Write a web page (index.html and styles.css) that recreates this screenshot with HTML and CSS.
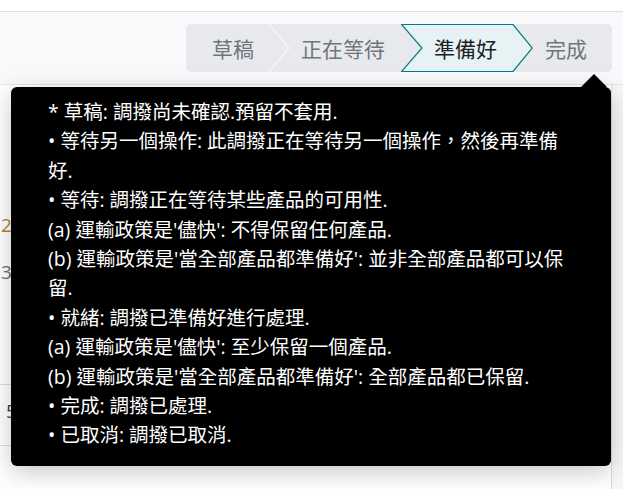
FILE: index.html
```html
<!DOCTYPE html>
<html lang="zh-Hant">
<head>
<meta charset="utf-8">
<title>調撥</title>
<link rel="stylesheet" href="styles.css">
</head>
<body>
<div class="topbar"></div>
<div class="cpanel">
  <div class="statusbar">
    <div class="step step-first">草稿</div>
    <svg class="sep" width="20" height="48" viewBox="0 0 20 48"><polyline points="0,0 20,24 0,48" fill="none" stroke="#ffffff" stroke-width="1"/></svg>
    <div class="step step-wait">正在等待</div>
    <div class="step step-active">
      <svg class="active-bg" width="132" height="48" viewBox="0 0 132 48"><polygon points="0.5,0.5 112,0.5 131.3,24 112,47.5 0.5,47.5 21,24" fill="#e6f2f3" stroke="#017e84" stroke-width="1.2"/></svg>
      <span class="step-label">準備好</span>
    </div>
    <div class="step step-last">完成</div>
  </div>
</div>
<div class="content">
  <div class="sheet">
    <div class="field field-date">26</div>
    <div class="field field-num">32</div>
    <div class="table">
      <div class="row">5</div>
    </div>
  </div>
  <div class="gutter"></div>
</div>

<div class="tooltip">
  <div class="tip-line">* 草稿: 調撥尚未確認.預留不套用.</div>
  <div class="tip-line">• 等待另一個操作: 此調撥正在等待另一個操作，然後再準備<br>好.</div>
  <div class="tip-line">• 等待: 調撥正在等待某些產品的可用性.</div>
  <div class="tip-line">(a) 運輸政策是'儘快': 不得保留任何產品.</div>
  <div class="tip-line">(b) 運輸政策是'當全部產品都準備好': 並非全部產品都可以保<br>留.</div>
  <div class="tip-line">• 就緒: 調撥已準備好進行處理.</div>
  <div class="tip-line">(a) 運輸政策是'儘快': 至少保留一個產品.</div>
  <div class="tip-line">(b) 運輸政策是'當全部產品都準備好': 全部產品都已保留.</div>
  <div class="tip-line">• 完成: 調撥已處理.</div>
  <div class="tip-line">• 已取消: 調撥已取消.</div>
</div>
</body>
</html>
```
FILE: styles.css
```css
html, body {
  margin: 0;
  padding: 0;
}
body {
  width: 623px;
  height: 489px;
  overflow: hidden;
  position: relative;
  background: #ffffff;
  font-family: "Open Sans", "Noto Sans CJK TC", sans-serif;
}
.topbar {
  height: 11px;
  background: #ffffff;
  border-bottom: 1px solid #dcdfe3;
}
.cpanel {
  height: 73px;
  background: #f8f9fa;
  display: flex;
  justify-content: flex-end;
  align-items: flex-start;
  padding: 12px 11px 0 0;
  box-sizing: border-box;
  border-bottom: 1px solid #e3e5e8;
}
.statusbar {
  display: flex;
  width: 426px;
  height: 48px;
  background: #e7e9ed;
  border-radius: 5px;
}
.step {
  height: 48px;
  display: flex;
  align-items: center;
  font-size: 21px;
  color: #6f757d;
  box-sizing: border-box;
  white-space: nowrap;
}
.sep {
  display: block;
  flex: 0 0 20px;
}
.step-first {
  width: 83px;
  padding-left: 26px;
}
.step-wait {
  width: 112px;
  padding-left: 12px;
}
.step-active {
  width: 132px;
  padding-left: 33px;
  position: relative;
  color: #1c2127;
}
.active-bg {
  position: absolute;
  left: 0;
  top: 0;
}
.step-label {
  position: relative;
}
.step-last {
  width: 79px;
  padding-left: 12px;
}
.content {
  display: flex;
  height: 404px;
}
.sheet {
  width: 611px;
  background: #ffffff;
  border-right: 1px solid #d9dbde;
  font-size: 19px;
  overflow: hidden;
}
.gutter {
  flex: 1;
  background: #f6f7f8;
}
.field {
  line-height: 26px;
  white-space: nowrap;
}
.field-date {
  margin-top: 127px;
  padding-left: 1px;
  color: #b0862e;
}
.field-num {
  margin-top: 21px;
  padding-left: 1px;
  color: #6c7178;
}
.table {
  margin-top: 99px;
  border-top: 1px solid #d9dbde;
  border-bottom: 1px solid #d9dbde;
  height: 60px;
}
.row {
  padding-left: 6px;
  padding-top: 15px;
  line-height: 22px;
  color: #3a3f45;
}
.tooltip {
  position: absolute;
  left: 11px;
  top: 87px;
  width: 600px;
  height: 379px;
  box-sizing: border-box;
  padding: 10px 0 16px 37px;
  background: #000000;
  color: #ffffff;
  border-radius: 6px;
  font-size: 19.5px;
  line-height: 29.4px;
  box-shadow: 0 6px 24px rgba(0, 0, 0, 0.22);
}
.tooltip::before {
  content: "";
  position: absolute;
  top: -13px;
  left: 570px;
  border-left: 13px solid transparent;
  border-right: 13px solid transparent;
  border-bottom: 13px solid #000000;
}
.tip-line {
  white-space: nowrap;
}
```
